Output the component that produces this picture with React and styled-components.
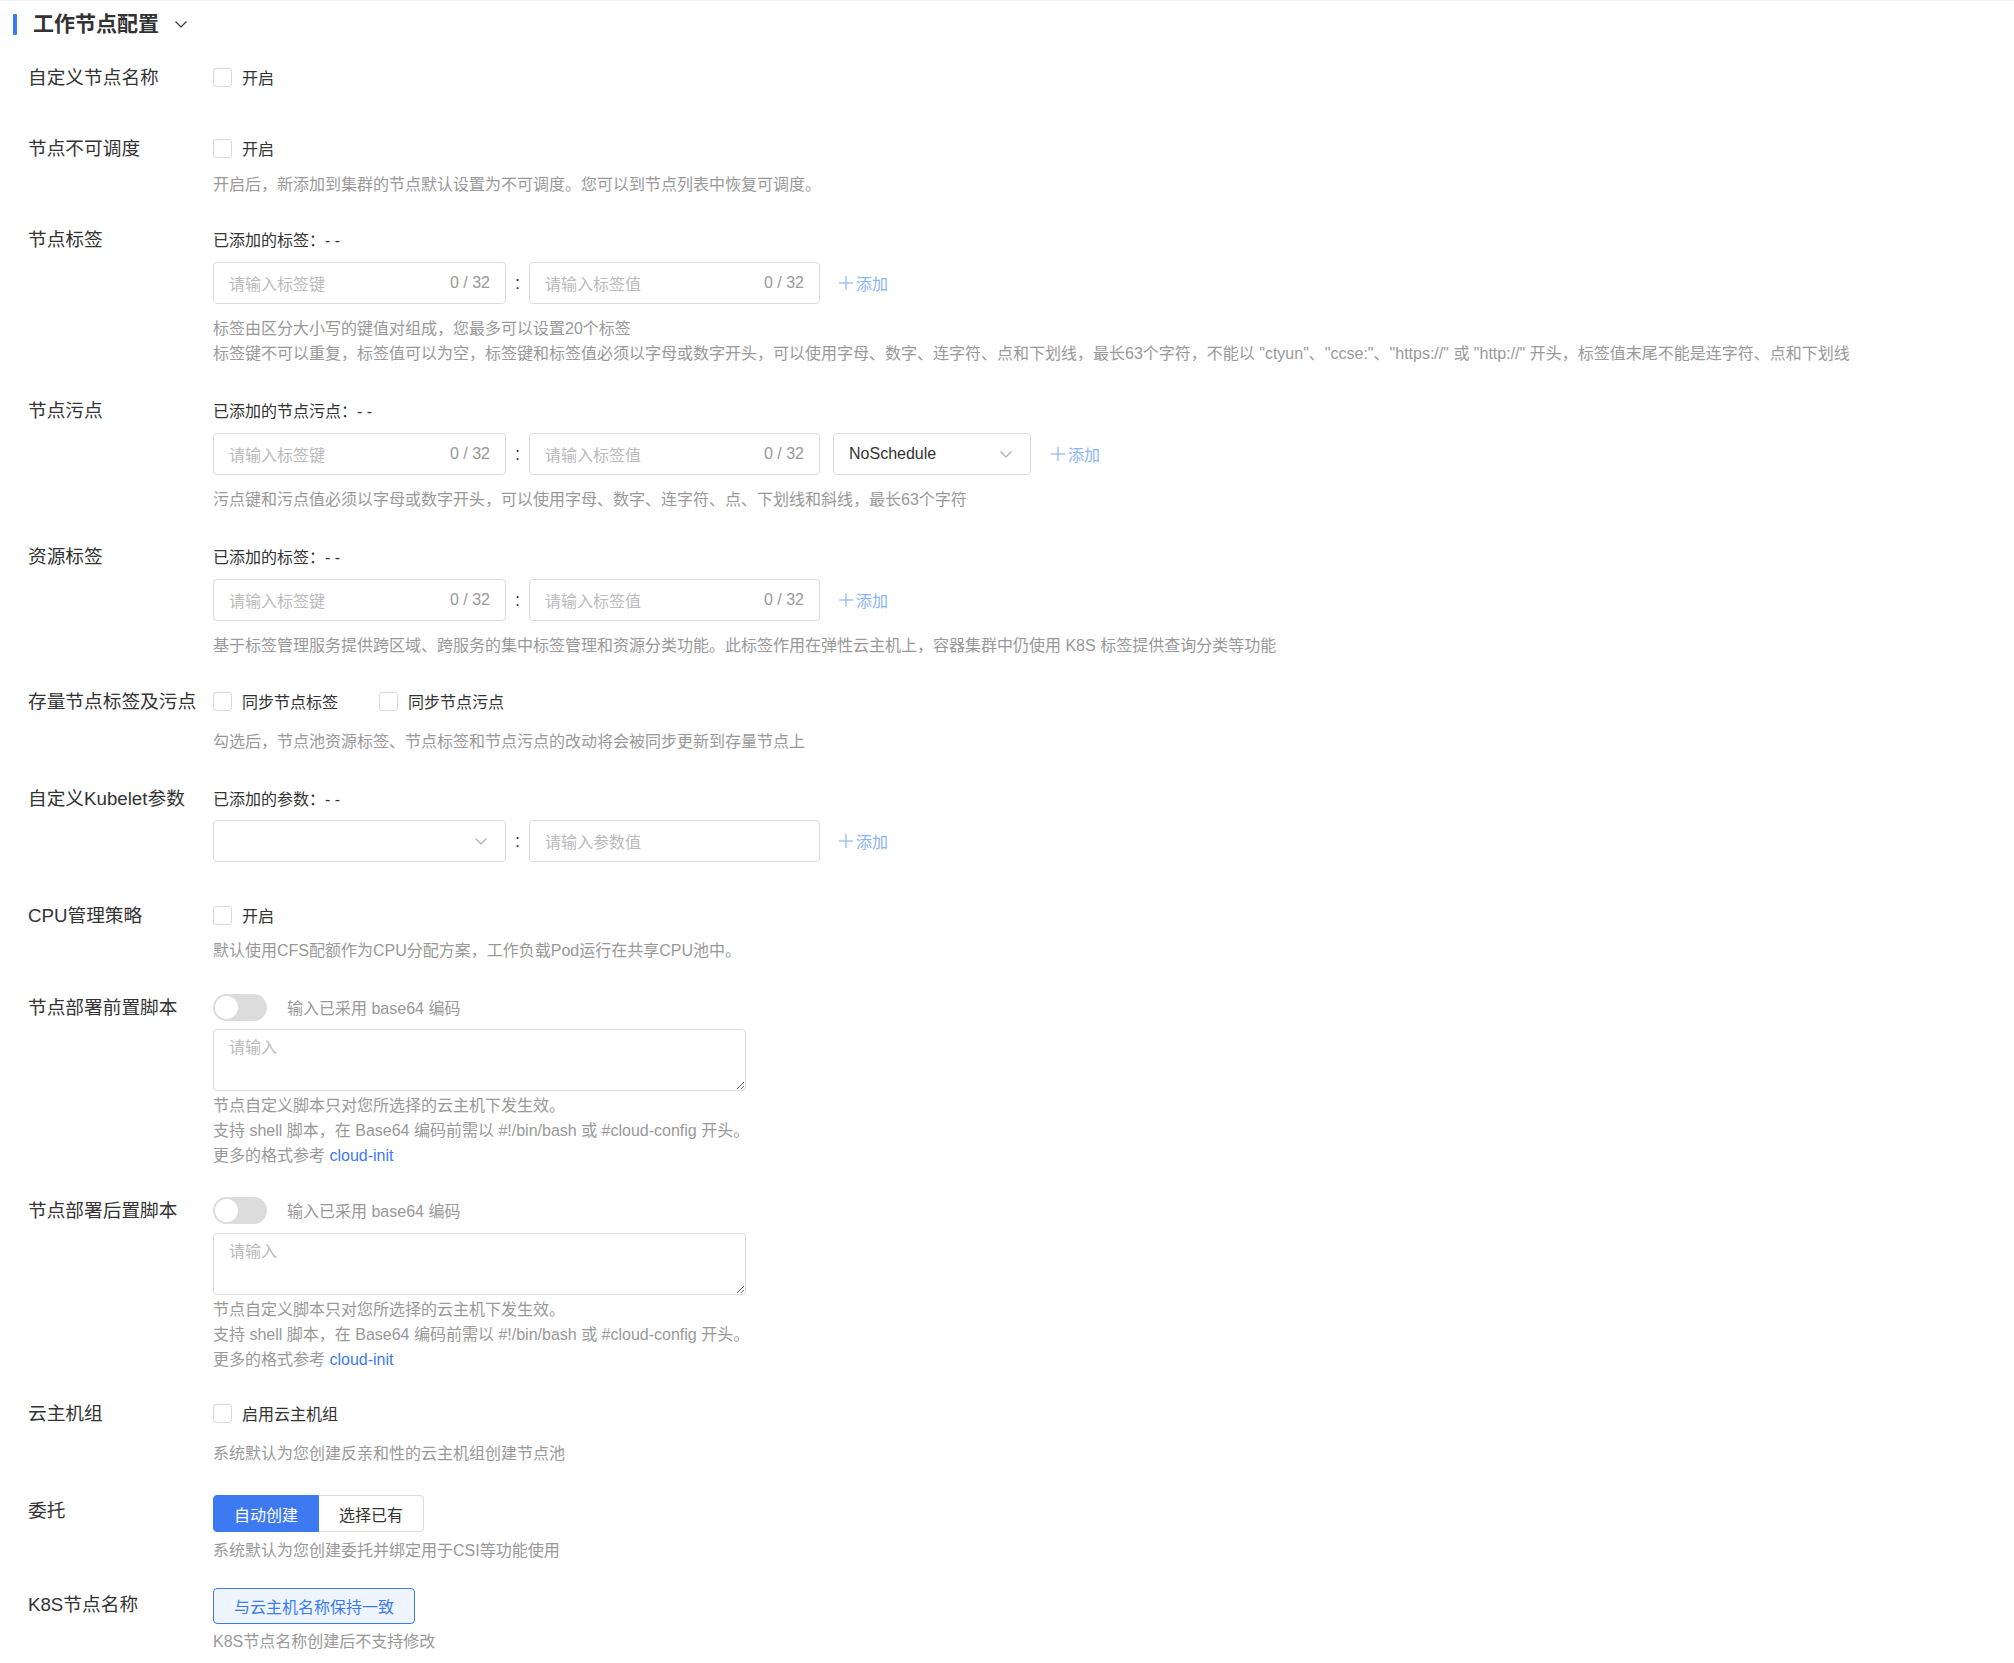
import React from 'react';
import styled, { createGlobalStyle } from 'styled-components';

const GlobalStyle = createGlobalStyle`
  html, body {
    margin: 0;
    padding: 0;
    background: #fff;
  }
  body {
    font-family: 'Liberation Sans', 'Noto Sans CJK SC', sans-serif;
    color: #333;
  }
  * {
    box-sizing: border-box;
  }
`;

const Chevron = ({ color = '#333', w = 12, h = 7 }) => (
  <svg width={w} height={h} viewBox="0 0 12 7" fill="none">
    <polyline points="0.5,0.5 6,6 11.5,0.5" stroke={color} strokeWidth="1.1" />
  </svg>
);

const PlusIcon = () => (
  <svg width="14" height="14" viewBox="0 0 14 14" fill="none">
    <line x1="7" y1="0" x2="7" y2="14" stroke="#8ab4f8" strokeWidth="1.2" />
    <line x1="0" y1="7" x2="14" y2="7" stroke="#8ab4f8" strokeWidth="1.2" />
  </svg>
);

const Checkbox = ({ text, $mr }) => (
  <CheckLabel $mr={$mr}>
    <CheckBox />
    <CheckText>{text}</CheckText>
  </CheckLabel>
);

const Field = ({ placeholder, count, width }) => (
  <TextField $w={width}>
    <Placeholder>{placeholder}</Placeholder>
    {count && <Counter>{count}</Counter>}
  </TextField>
);

const AddButton = ({ $ml = 19 }) => (
  <AddLink $ml={$ml}>
    <PlusIcon />
    <span>添加</span>
  </AddLink>
);

const KeyValueRow = ({ keyNode, valueNode, extra, addMl, mt = 7 }) => (
  <InputRow $mt={mt}>
    {keyNode}
    <Colon>:</Colon>
    {valueNode}
    {extra}
    <AddButton $ml={addMl} />
  </InputRow>
);

const ScriptBlock = ({ mt }) => (
  <>
    <Line>
      <Switch>
        <Knob />
      </Switch>
      <SwitchText>输入已采用 base64 编码</SwitchText>
    </Line>
    <TextArea placeholder="请输入" $mt={mt} />
    <Hint $mt={2}>
      <div>节点自定义脚本只对您所选择的云主机下发生效。</div>
      <div>支持 shell 脚本，在 Base64 编码前需以 #!/bin/bash 或 #cloud-config 开头。</div>
      <div>
        更多的格式参考 <Link>cloud-init</Link>
      </div>
    </Hint>
  </>
);

export default function App() {
  return (
    <Page>
      <GlobalStyle />
      <Header>
        <Bar />
        <Title>工作节点配置</Title>
        <HeaderChevron>
          <Chevron />
        </HeaderChevron>
      </Header>

      <Form>
        <FormItem $mb={38}>
          <Label>自定义节点名称</Label>
          <Content>
            <Line>
              <Checkbox text="开启" />
            </Line>
          </Content>
        </FormItem>

        <FormItem $mb={26}>
          <Label>节点不可调度</Label>
          <Content>
            <Line>
              <Checkbox text="开启" />
            </Line>
            <Hint $mt={8}>开启后，新添加到集群的节点默认设置为不可调度。您可以到节点列表中恢复可调度。</Hint>
          </Content>
        </FormItem>

        <FormItem $mb={28}>
          <Label>节点标签</Label>
          <Content>
            <Line>已添加的标签：- -</Line>
            <KeyValueRow
              keyNode={<Field placeholder="请输入标签键" count="0 / 32" width={293} />}
              valueNode={<Field placeholder="请输入标签值" count="0 / 32" width={291} />}
            />
            <Hint $mt={12}>
              <div>标签由区分大小写的键值对组成，您最多可以设置20个标签</div>
              <div>
                标签键不可以重复，标签值可以为空，标签键和标签值必须以字母或数字开头，可以使用字母、数字、连字符、点和下划线，最长63个字符，不能以 "ctyun"、"ccse:"、"https://" 或 "http://" 开头，标签值末尾不能是连字符、点和下划线
              </div>
            </Hint>
          </Content>
        </FormItem>

        <FormItem $mb={28}>
          <Label>节点污点</Label>
          <Content>
            <Line>已添加的节点污点：- -</Line>
            <KeyValueRow
              keyNode={<Field placeholder="请输入标签键" count="0 / 32" width={293} />}
              valueNode={<Field placeholder="请输入标签值" count="0 / 32" width={291} />}
              extra={
                <SelectBox $w={198} $ml={13}>
                  <SelectValue>NoSchedule</SelectValue>
                  <Chevron color="#aaa" />
                </SelectBox>
              }
              addMl={20}
            />
            <Hint $mt={12}>污点键和污点值必须以字母或数字开头，可以使用字母、数字、连字符、点、下划线和斜线，最长63个字符</Hint>
          </Content>
        </FormItem>

        <FormItem $mb={27}>
          <Label>资源标签</Label>
          <Content>
            <Line>已添加的标签：- -</Line>
            <KeyValueRow
              keyNode={<Field placeholder="请输入标签键" count="0 / 32" width={293} />}
              valueNode={<Field placeholder="请输入标签值" count="0 / 32" width={291} />}
            />
            <Hint $mt={12}>
              基于标签管理服务提供跨区域、跨服务的集中标签管理和资源分类功能。此标签作用在弹性云主机上，容器集群中仍使用 K8S 标签提供查询分类等功能
            </Hint>
          </Content>
        </FormItem>

        <FormItem $mb={28}>
          <Label>存量节点标签及污点</Label>
          <Content>
            <Line>
              <Checkbox text="同步节点标签" $mr={41} />
              <Checkbox text="同步节点污点" />
            </Line>
            <Hint $mt={12}>勾选后，节点池资源标签、节点标签和节点污点的改动将会被同步更新到存量节点上</Hint>
          </Content>
        </FormItem>

        <FormItem $mb={37}>
          <Label>自定义Kubelet参数</Label>
          <Content>
            <Line>已添加的参数：- -</Line>
            <KeyValueRow
              mt={6}
              keyNode={
                <SelectBox $w={293} $ml={0}>
                  <SelectValue />
                  <Chevron color="#aaa" />
                </SelectBox>
              }
              valueNode={<Field placeholder="请输入参数值" width={291} />}
            />
          </Content>
        </FormItem>

        <FormItem $mb={28}>
          <Label>CPU管理策略</Label>
          <Content>
            <Line>
              <Checkbox text="开启" />
            </Line>
            <Hint $mt={7}>默认使用CFS配额作为CPU分配方案，工作负载Pod运行在共享CPU池中。</Hint>
          </Content>
        </FormItem>

        <FormItem $mb={26}>
          <Label>节点部署前置脚本</Label>
          <Content>
            <ScriptBlock mt={6} />
          </Content>
        </FormItem>

        <FormItem $mb={25}>
          <Label>节点部署后置脚本</Label>
          <Content>
            <ScriptBlock mt={7} />
          </Content>
        </FormItem>

        <FormItem $mb={28}>
          <Label>云主机组</Label>
          <Content>
            <Line>
              <Checkbox text="启用云主机组" />
            </Line>
            <Hint $mt={12}>系统默认为您创建反亲和性的云主机组创建节点池</Hint>
          </Content>
        </FormItem>

        <FormItem $mb={25}>
          <Label>委托</Label>
          <Content>
            <SegGroup>
              <SegButton $active>自动创建</SegButton>
              <SegButton>选择已有</SegButton>
            </SegGroup>
            <Hint $mt={6}>系统默认为您创建委托并绑定用于CSI等功能使用</Hint>
          </Content>
        </FormItem>

        <FormItem $mb={20}>
          <Label>K8S节点名称</Label>
          <Content>
            <OutlineButton>与云主机名称保持一致</OutlineButton>
            <Hint $mt={5}>K8S节点名称创建后不支持修改</Hint>
          </Content>
        </FormItem>
      </Form>
    </Page>
  );
}

const Page = styled.div`
  width: 100%;
  min-height: 1663px;
  background: #fff;
  border-top: 1px solid #f0f0f0;
`;

const Header = styled.div`
  display: flex;
  align-items: center;
  height: 22px;
  margin-top: 12px;
  padding-left: 13px;
`;

const Bar = styled.div`
  width: 4px;
  height: 21px;
  background: #3d7af2;
  border-radius: 1px;
`;

const Title = styled.div`
  margin-left: 16px;
  font-size: 21px;
  font-weight: 700;
  line-height: 22px;
  color: #333;
`;

const HeaderChevron = styled.span`
  display: flex;
  margin-left: 16px;
  margin-top: 1px;
`;

const Form = styled.div`
  padding-left: 28px;
  margin-top: 26px;
`;

const FormItem = styled.div`
  display: flex;
  margin-bottom: ${(p) => p.$mb}px;
`;

const Label = styled.div`
  width: 185px;
  flex-shrink: 0;
  padding-top: 1px;
  font-size: 18.7px;
  line-height: 32px;
  color: #333;
  white-space: nowrap;
`;

const Content = styled.div`
  flex: 1;
  display: flex;
  flex-direction: column;
  align-items: flex-start;
  font-size: 16px;
  color: #333;
`;

const Line = styled.div`
  display: flex;
  align-items: center;
  height: 32px;
  font-size: 16px;
  color: #333;
`;

const Hint = styled.div`
  margin-top: ${(p) => p.$mt}px;
  font-size: 16px;
  line-height: 25px;
  color: #999;
  white-space: nowrap;
`;

const CheckLabel = styled.label`
  display: flex;
  align-items: center;
  margin-right: ${(p) => p.$mr || 0}px;
`;

const CheckBox = styled.span`
  width: 19px;
  height: 19px;
  border: 1px solid #d9d9d9;
  border-radius: 3px;
  background: #fff;
`;

const CheckText = styled.span`
  margin-left: 10px;
  font-size: 16px;
  color: #333;
`;

const InputRow = styled.div`
  display: flex;
  align-items: center;
  margin-top: ${(p) => p.$mt}px;
`;

const TextField = styled.div`
  width: ${(p) => p.$w}px;
  height: 42px;
  border: 1px solid #dcdcdc;
  border-radius: 4px;
  display: flex;
  align-items: center;
  justify-content: space-between;
  padding: 0 15px;
  font-size: 16px;
  background: #fff;
`;

const Placeholder = styled.span`
  color: #bbb;
`;

const Counter = styled.span`
  color: #999;
`;

const Colon = styled.span`
  width: 23px;
  text-align: center;
  font-size: 18px;
  color: #333;
`;

const SelectBox = styled.div`
  width: ${(p) => p.$w}px;
  height: 42px;
  margin-left: ${(p) => p.$ml}px;
  border: 1px solid #dcdcdc;
  border-radius: 4px;
  display: flex;
  align-items: center;
  justify-content: space-between;
  padding: 0 18px 0 15px;
  background: #fff;
`;

const SelectValue = styled.span`
  font-size: 16px;
  color: #333;
`;

const AddLink = styled.span`
  display: flex;
  align-items: center;
  gap: 3px;
  margin-left: ${(p) => p.$ml}px;
  font-size: 16px;
  color: #8ab4f8;
`;

const Switch = styled.span`
  position: relative;
  display: block;
  width: 54px;
  height: 27px;
  border-radius: 14px;
  background: #dcdcdc;
`;

const Knob = styled.span`
  position: absolute;
  left: 2px;
  top: 2px;
  width: 23px;
  height: 23px;
  border-radius: 50%;
  background: #fff;
`;

const SwitchText = styled.span`
  margin-left: 20px;
  font-size: 16px;
  color: #999;
`;

const TextArea = styled.textarea`
  display: block;
  width: 533px;
  height: 62px;
  margin-top: ${(p) => p.$mt}px;
  padding: 8px 15px;
  border: 1px solid #dcdcdc;
  border-radius: 4px;
  font-family: 'Liberation Sans', 'Noto Sans CJK SC', sans-serif;
  font-size: 16px;
  line-height: 20px;
  color: #333;
  outline: none;

  &::placeholder {
    color: #bbb;
  }
`;

const Link = styled.span`
  color: #3d7af2;
`;

const SegGroup = styled.div`
  display: flex;
  margin-top: 1px;
`;

const SegButton = styled.div`
  height: 37px;
  padding: 0 20px;
  display: flex;
  align-items: center;
  font-size: 16px;
  border: 1px solid ${(p) => (p.$active ? '#3d7af2' : '#dcdcdc')};
  background: ${(p) => (p.$active ? '#3d7af2' : '#fff')};
  color: ${(p) => (p.$active ? '#fff' : '#333')};

  &:first-child {
    border-radius: 4px 0 0 4px;
  }

  &:last-child {
    border-radius: 0 4px 4px 0;
    border-left: none;
  }
`;

const OutlineButton = styled.div`
  height: 36px;
  padding: 0 20px;
  display: flex;
  align-items: center;
  font-size: 16px;
  color: #3d7af2;
  background: #eef5ff;
  border: 1px solid #3d7af2;
  border-radius: 4px;
`;
